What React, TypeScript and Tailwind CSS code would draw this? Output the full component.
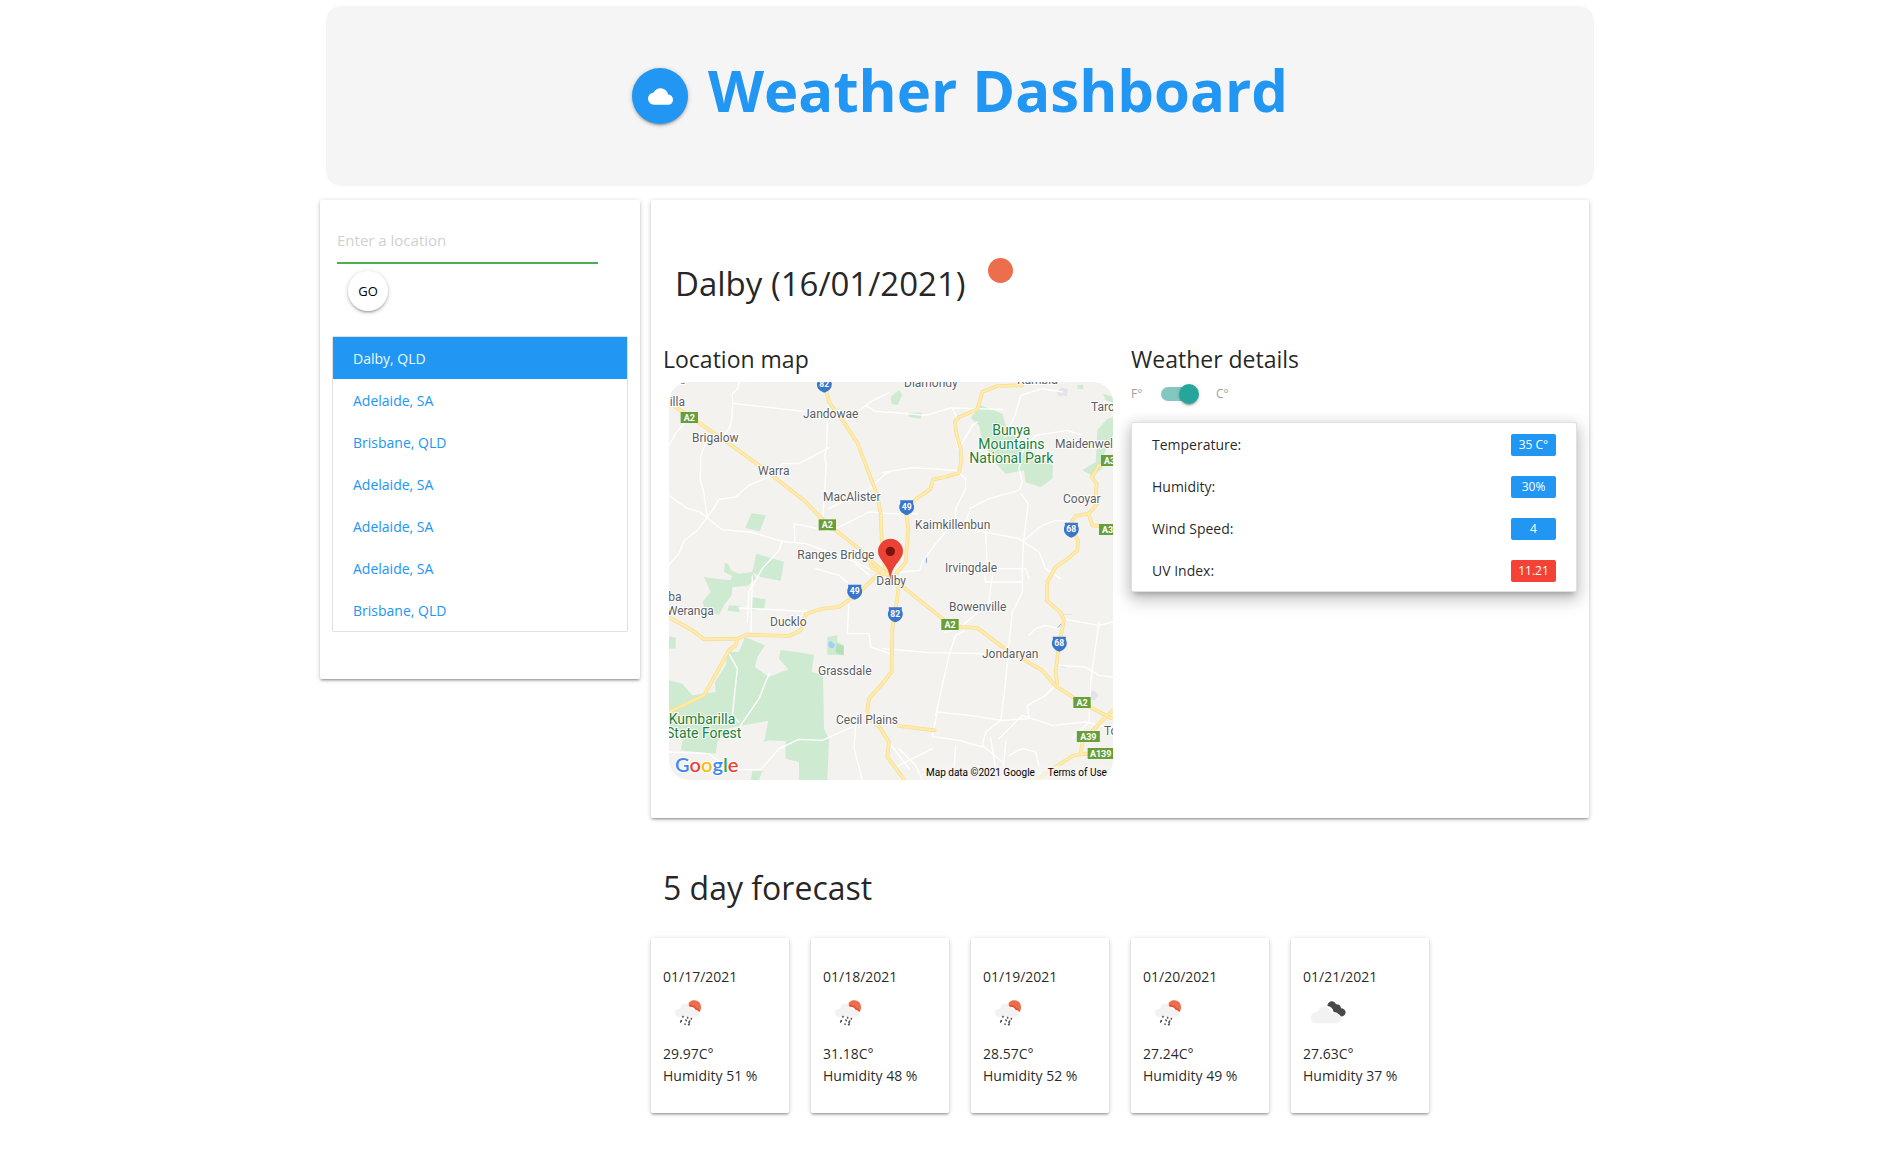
import { useState } from "react";
import { MdCloud } from "react-icons/md";

const cardShadow =
  "rounded-xs bg-white shadow-[0_2px_2px_0_rgba(0,0,0,0.14),0_3px_1px_-2px_rgba(0,0,0,0.12),0_1px_5px_0_rgba(0,0,0,0.2)]";

const places = [
  "Dalby, QLD",
  "Adelaide, SA",
  "Brisbane, QLD",
  "Adelaide, SA",
  "Adelaide, SA",
  "Adelaide, SA",
  "Brisbane, QLD",
];

const details = [
  { label: "Temperature:", value: "35 C°", tone: "bg-[#2196f3]" },
  { label: "Humidity:", value: "30%", tone: "bg-[#2196f3]" },
  { label: "Wind Speed:", value: "4", tone: "bg-[#2196f3]" },
  { label: "UV Index:", value: "11.21", tone: "bg-[#f44336]" },
];

const forecast = [
  { date: "01/17/2021", temp: "29.97C°", humidity: 51, rain: true },
  { date: "01/18/2021", temp: "31.18C°", humidity: 48, rain: true },
  { date: "01/19/2021", temp: "28.57C°", humidity: 52, rain: true },
  { date: "01/20/2021", temp: "27.24C°", humidity: 49, rain: true },
  { date: "01/21/2021", temp: "27.63C°", humidity: 37, rain: false },
];

function RainIcon() {
  return (
    <svg viewBox="0 0 150 150" className="size-[50px]" aria-label="Rain">
      <path d="M76 50C75 36 84 31 94 31c12 0 20 9 20 20 0 5-1 10-4 14-3-5-8-7-12-8-3-7-12-11-22-7z" fill="#ec6e4c" />
      <path d="M77 46c9-3 18 1 22 8 4 1 9 4 12 8l-2 5c-3-5-7-7-12-8-3-7-11-11-20-8z" fill="#e2502f" />
      <path
        d="M49 82a13 13 0 0 1 1-26c2-1 3-3 3-6a14 14 0 0 1 27 1c6 1 9 5 10 8 10-1 17 5 17 12 0 6-5 11-11 11z"
        fill="#f2f2f2"
      />
      <path
        d="M60 80v1M55 92l-2 4M74 83v1M69 90l1 2M85 86v1M80 93l-2 4M66 102v1M79 102l-2 2"
        stroke="#48484a"
        strokeWidth="5"
        strokeLinecap="round"
      />
    </svg>
  );
}

function CloudsIcon() {
  return (
    <svg viewBox="-12 0 150 150" className="size-[50px]" aria-label="Broken clouds">
      <path
        d="M61 48C63 30 82 30 87 43c8-1 15 4 15 12 13 1 18 13 10 21-5 5-12 4-17 0-2-7-8-10-15-10-2-11-9-17-19-18z"
        fill="#48484a"
      />
      <path
        d="M29 100a17 17 0 0 1-1-34c2-1 5-1 6-3a17 17 0 0 1 33-1c2 5 8 7 12 7 11 0 24 4 24 16 0 8-6 15-14 15z"
        fill="#f2f2f2"
      />
    </svg>
  );
}

type Pt = { x: number; y: number; text: string };

const towns: Pt[] = [
  { x: -14, y: 6, text: "erra" },
  { x: 2, y: 72, text: "illa" },
  { x: 402, y: 108, text: "Jandowae" },
  { x: 69, y: 180, text: "Brigalow" },
  { x: 267, y: 279, text: "Warra" },
  { x: 462, y: 357, text: "MacAlister" },
  { x: 385, y: 531, text: "Ranges Bridge" },
  { x: 705, y: 14, text: "Diamondy" },
  { x: 1044, y: 7, text: "Kumbia" },
  { x: 1266, y: 87, text: "Tarong" },
  { x: 1158, y: 198, text: "Maidenwell" },
  { x: 1182, y: 363, text: "Cooyar" },
  { x: 738, y: 441, text: "Kaimkillenbun" },
  { x: 828, y: 570, text: "Irvingdale" },
  { x: 622, y: 609, text: "Dalby" },
  { x: -2, y: 657, text: "ba" },
  { x: -7, y: 699, text: "Weranga" },
  { x: 303, y: 732, text: "Ducklo" },
  { x: 447, y: 879, text: "Grassdale" },
  { x: 501, y: 1026, text: "Cecil Plains" },
  { x: 840, y: 687, text: "Bowenville" },
  { x: 939, y: 828, text: "Jondaryan" },
  { x: 1305, y: 1060, text: "To" },
];

const highways: Pt[] = [
  { x: 61, y: 106, text: "A2" },
  { x: 475, y: 428, text: "A2" },
  { x: 843, y: 727, text: "A2" },
  { x: 1239, y: 961, text: "A2" },
  { x: 1322, y: 235, text: "A3" },
  { x: 1316, y: 442, text: "A3" },
  { x: 1258, y: 1063, text: "A39" },
  { x: 1295, y: 1114, text: "A139" },
];

const routes: Pt[] = [
  { x: 466, y: 8, text: "82" },
  { x: 713, y: 376, text: "49" },
  { x: 1207, y: 443, text: "68" },
  { x: 557, y: 629, text: "49" },
  { x: 679, y: 697, text: "82" },
  { x: 1171, y: 785, text: "68" },
];

const minorRoads = [
  "M210 0L208 18 190 35 191 64 188 116 180 140 165 158 133 175 106 192 95 225 95 260 93 290 103 325 116 409",
  "M0 341L55 380 90 388 116 409 160 443 245 450 340 478 410 485 475 508 560 540 610 565",
  "M191 64L420 90M475 120L473 196 466 225 472 245 466 340 462 400M480 197L390 245 340 245 300 285 240 310 200 345 150 352 130 385 85 445 45 477 30 515 0 548",
  "M0 190L20 155 60 108M480 447L376 425 377 480M340 478L330 505 280 560 240 628 235 720",
  "M590 70L620 88 663 92M530 115L612 55 663 30M480 380L600 320 650 275 663 272M500 440L600 390 660 395 745 395",
  "M660 90L770 100 845 78 1000 82M850 80L865 110 860 170 868 200M1008 165L1040 95 1055 40 1120 20 1180 30",
  "M870 200L910 130 925 120M640 272L730 257 860 265 890 290 890 320 860 380 860 415 800 485 760 540 752 565 690 570",
  "M902 388L890 420 920 445 1050 470 1110 510 1130 560 1175 590M902 380L960 350 1050 325 1060 300 1050 260 1060 210 1100 160 1195 145 1240 160",
  "M1055 335L1078 365 1063 480 1060 570M1065 475L1120 430 1160 415 1210 418M950 450L955 560 1070 560 1080 590",
  "M640 800L780 812 990 816 1020 790M1020 800L1005 940 995 1015 950 1050 940 1090 1000 1140M1020 785L1030 690 1060 630 1060 560M945 560L950 600 1060 600",
  "M805 990L900 1000 1000 1015 1080 1010 1075 970 1130 940 1160 910M805 990L790 1064 870 1075 940 1095M990 1070L1060 1000 1150 1030 1250 1020 1332 1040",
  "M0 1110L120 1115 180 1162 275 1163 330 1100 390 1072 460 1075 560 1030M560 1030L555 1100 580 1194M690 1100L740 1150 760 1194",
  "M560 545L600 578M860 1090L855 1160M965 1068L980 1160M1190 712L1290 730 1332 720M1170 850L1250 855 1290 880 1332 885M1290 720L1265 900 1260 1020 1210 1070",
  "M540 650L535 755 600 755 605 795 663 815M830 750L870 740 960 660 970 580M1080 760L1100 740 1130 730 1170 740M800 1000L840 820 860 760 885 748",
  "M250 582L246 750M440 560L510 580 535 602M210 678L445 690M180 815L205 860 190 1000 210 1020M300 875L270 950 215 1030",
  "M648 1065L720 1160M680 1155L790 1100M1020 1120L1060 1100 1100 1110 1120 1194M1010 1080L1000 1194",
];

const majorRoads = [
  "M20 76L45 92 160 170 270 250 405 355 470 422 570 500 602 532 650 575 690 605 820 710 850 733 925 738 1010 802 1120 865 1160 912 1230 958 1320 1005 1332 1010",
  "M468 10L480 60 520 115 565 182 625 340 635 395 638 470 648 560",
  "M1060 10L985 12 940 30 925 82 870 105 858 120 863 160 875 200 876 240 870 272 830 285 792 292 785 320 740 352 718 375 712 400 718 440 710 540 690 565 665 590",
  "M602 530L608 558 645 573M0 706L65 742 105 772 205 770 235 758 360 762 395 745 412 695 460 680 510 675 560 640 625 580 655 573",
  "M205 770L200 790 180 805 105 940 0 990M690 600L685 650 670 740 668 870 640 905 600 950 595 985 600 1010 635 1040 660 1080 655 1125 700 1185 710 1200",
  "M690 1032L797 1045M1332 240L1290 250 1268 285 1283 305 1280 340 1285 365 1260 395 1220 402 1200 430 1227 475 1225 505 1190 535 1160 555 1135 600 1133 655 1175 692 1185 715 1170 785 1160 870 1165 905",
  "M1258 393L1270 430 1330 435M1332 985L1290 1025 1240 1080 1235 1115 1260 1117M1100 1194L1210 1122 1240 1115",
];

const forests = [
  "M248 394L291 400 272 448 228 438zM262 515L345 540 335 596 275 585 250 570z",
  "M105 585L140 590 185 595 190 582 165 570 168 543 180 548 185 565 210 575 250 570 262 590 235 612 190 615 188 640 165 670 150 698 110 690 100 660 125 630z",
  "M250 646L290 652 285 680 248 686zM180 670L212 672 210 690 175 686zM0 762L20 768 20 800 0 800z",
  "M228 765L288 790 265 825 258 855 300 885 358 862 330 830 335 804 365 808 435 818 428 870 462 880 465 1040 480 1070 475 1194 390 1194 390 1140 350 1130 350 1078 300 1075 285 1080 298 1016 180 1038 145 1080 140 1115 35 1105 45 1060 0 1050 0 895 40 905 70 940 140 930 138 900 170 850 175 810 210 810z",
  "M475 765L505 760 505 780 525 790 525 820 475 818zM250 1168L280 1166 270 1194 246 1194z",
  "M665 45L690 24 700 40 685 70 668 65zM718 92L760 92 755 110 720 105z",
  "M905 108L935 70 1000 95 1010 130 1060 190 1152 250 1150 290 1115 315 1070 300 1065 265 1010 275 985 250 960 210 940 180 930 130z",
  "M1225 10L1242 8 1244 22 1226 20zM1302 35L1332 45 1332 62 1310 55zM1285 145L1315 110 1332 105 1332 160 1305 215 1300 260 1268 280 1240 265 1280 240z",
];

function LocationMap() {
  return (
    <svg
      viewBox="0 0 1332 1194"
      role="img"
      aria-label="Map of Dalby"
      className="block w-full rounded-[20px] bg-[#f3f2ef] font-[Roboto,sans-serif]"
    >
      {forests.map((d) => (
        <path key={d} d={d} fill="#ceead0" />
      ))}
      <path d="M477 783l8-6 14 12-6 10-12-2z" fill="#9fd0fb" />
      <path d="M502 785l22 6v28l-24-6z" fill="#b4dfba" />
      <path d="M1165 30l12-12 18 4-2 18-24 2zM1262 935l12-8 14 12-12 16-10-4zM575 398l14-2M1182 697l28 1M1170 850l20 8" fill="#e3e4e8" stroke="#e3e4e8" strokeWidth="3" />
      <path d="M772 525v18M1165 738l12-12" stroke="#7ba5d8" strokeWidth="3" />
      <g fill="none" strokeLinejoin="round" strokeLinecap="round">
        {minorRoads.map((d) => (
          <path key={d} d={d} stroke="#ffffff" strokeWidth="4" />
        ))}
        {majorRoads.map((d) => (
          <path key={d} d={d} stroke="#f9dc8c" strokeWidth="11" />
        ))}
        {majorRoads.map((d) => (
          <path key={d} d={d} stroke="#ffebab" strokeWidth="7" />
        ))}
      </g>
      {highways.map((h) => {
        const w = h.text.length === 4 ? 78 : h.text.length === 3 ? 69 : 52;
        return (
          <g key={h.x}>
            <rect x={h.x - w / 2} y={h.y - 16} width={w} height="33" fill="#689f38" />
            <text x={h.x} y={h.y + 10} textAnchor="middle" fontSize="27" fontWeight="700" fill="#fff">
              {h.text}
            </text>
          </g>
        );
      })}
      {routes.map((r) => (
        <g key={r.x} transform={`translate(${r.x} ${r.y})`}>
          <path d="M-20-21h40q-3 8 2 16c2 15-8 24-22 29-14-5-24-14-22-29q5-8 2-16z" fill="#3a76cc" />
          <text y="8" textAnchor="middle" fontSize="26" fontWeight="700" fill="#fff">
            {r.text}
          </text>
        </g>
      ))}
      <g fontSize="36" fill="#5a5d62" stroke="#ffffff" strokeWidth="6" strokeLinejoin="round" paintOrder="stroke">
        {towns.map((t) => (
          <text key={`${t.x}-${t.y}`} x={t.x} y={t.y}>
            {t.text}
          </text>
        ))}
        <g fill="#188038" fontSize="42">
          <text x="1027" y="160" textAnchor="middle">Bunya</text>
          <text x="1027" y="202" textAnchor="middle">Mountains</text>
          <text x="1027" y="244" textAnchor="middle">National Park</text>
          <text x="-1" y="1026">Kumbarilla</text>
          <text x="-9" y="1068">State Forest</text>
        </g>
      </g>
      <path
        d="M664 594c-3-28-12-40-23-55-8-12-14-18-14-31a37 37 0 0 1 75 0c0 13-6 19-14 31-12 15-21 27-24 55z"
        fill="#ea4335"
      />
      <circle cx="664" cy="508" r="14" fill="#7f120c" />
      <text
        x="18"
        y="1171"
        fontSize="60"
        fontWeight="600"
        className="font-[Lato,sans-serif]"
        stroke="#ffffff"
        strokeWidth="6"
        paintOrder="stroke"
      >
        <tspan fill="#4285f4">G</tspan>
        <tspan fill="#ea4335">o</tspan>
        <tspan fill="#fbbc04">o</tspan>
        <tspan fill="#4285f4">g</tspan>
        <tspan fill="#34a853">l</tspan>
        <tspan fill="#ea4335">e</tspan>
      </text>
      <rect x="756" y="1152" width="576" height="42" fill="#f5f5f5" fillOpacity="0.7" />
      <g fontSize="30" fill="#000">
        <text x="771" y="1181">Map data ©2021 Google</text>
        <text x="1136" y="1181">Terms of Use</text>
      </g>
    </svg>
  );
}

export default function App() {
  const [celsius, setCelsius] = useState(true);
  return (
    <div className="min-h-screen bg-white pt-1.5 pl-1.5 font-['Open_Sans','Noto_Sans',sans-serif] text-sm text-black/87">
      <div className="mx-auto max-w-[1269px]">
        <header className="-mr-[5px] ml-1.5 flex h-[180px] items-center justify-center gap-5 rounded-[15px] bg-[#f5f5f5]">
          <span className="flex size-14 items-center justify-center rounded-full bg-[#2196f3] text-white shadow-[0_2px_2px_0_rgba(0,0,0,0.14),0_3px_1px_-2px_rgba(0,0,0,0.12),0_1px_5px_0_rgba(0,0,0,0.2)]">
            <MdCloud size={25} />
          </span>
          <h1 className="pb-3 text-[58px] leading-none font-bold text-[#2196f3]">Weather Dashboard</h1>
        </header>

        <div className="mt-3.5 flex items-start gap-[11px]">
          <aside className={`w-80 shrink-0 px-3 pb-[47px] ${cardShadow}`}>
            <form className="px-[5px] pt-[18px]" onSubmit={(e) => e.preventDefault()}>
              <input
                aria-label="Enter a location"
                placeholder="Enter a location"
                className="block h-[46px] w-[261px] border-b-2 border-[#4caf50] text-[15px] outline-none placeholder:text-[#d1d1d1]"
              />
              <button className="mt-[7px] ml-[11px] flex size-10 items-center justify-center rounded-full bg-white text-[13px] text-black shadow-[0_2px_2px_0_rgba(0,0,0,0.14),0_3px_1px_-2px_rgba(0,0,0,0.12),0_1px_5px_0_rgba(0,0,0,0.2)]">
                GO
              </button>
            </form>
            <nav className="mt-[25px] rounded-xs border border-[#e0e0e0]" aria-label="Saved locations">
              {places.map((place, i) => (
                <a
                  key={i}
                  href="#"
                  className={`flex h-[42px] items-center px-5 pt-0.5 ${i === 0 ? "bg-[#2196f3] text-[#eafaf9]" : "text-[#2196f3]"}`}
                >
                  {place}
                </a>
              ))}
            </nav>
          </aside>

          <main className="min-w-0 flex-1">
            <section className={`px-3 pt-[58px] pb-[38px] ${cardShadow}`}>
              <div className="flex items-start gap-[22px] pl-3">
                <h2 className="pt-0.5 text-[33px] leading-[48px]">Dalby (16/01/2021)</h2>
                <span className="size-[25px] rounded-full bg-[#ec6e4c]" aria-label="Clear sky" />
              </div>
              <div className="mt-9 grid grid-cols-2 gap-[22px]">
                <div>
                  <h3 className="text-[23px] leading-[30px]">Location map</h3>
                  <div className="mt-2 -mr-1 ml-1.5">
                    <LocationMap />
                  </div>
                </div>
                <div>
                  <h3 className="text-[23px] leading-[30px]">Weather details</h3>
                  <label className="mt-2.5 flex h-5 cursor-pointer items-center text-xs text-[#9e9e9e]">
                    <span className="w-[30px]">F°</span>
                    <input
                      type="checkbox"
                      className="peer sr-only"
                      checked={celsius}
                      onChange={(e) => setCelsius(e.target.checked)}
                    />
                    <span className="mr-[19px] flex h-3.5 w-9 items-center rounded-full bg-[#84c7c1] peer-checked:justify-end">
                      <span className="-mr-0.5 size-5 shrink-0 rounded-full bg-[#26a69a] shadow-[0_3px_1px_-2px_rgba(0,0,0,0.2),0_2px_2px_0_rgba(0,0,0,0.14),0_1px_5px_0_rgba(0,0,0,0.12)]" />
                    </span>
                    <span>C°</span>
                  </label>
                  <dl className="mt-[18px] rounded-xs border border-[#e0e0e0] bg-white shadow-[0_8px_17px_2px_rgba(0,0,0,0.14),0_3px_14px_2px_rgba(0,0,0,0.12),0_5px_5px_-3px_rgba(0,0,0,0.2)]">
                    {details.map((d) => (
                      <div key={d.label} className="flex h-[42px] items-center justify-between px-5 pt-0.5">
                        <dt>{d.label}</dt>
                        <dd className={`flex h-[22px] w-[45px] items-center justify-center rounded-xs text-xs text-white ${d.tone}`}>
                          {d.value}
                        </dd>
                      </div>
                    ))}
                  </dl>
                </div>
              </div>
            </section>

            <h2 className="mt-[46px] pl-3 text-[32px] leading-[48px]">5 day forecast</h2>
            <div className="mt-[26px] flex flex-wrap gap-[22px] pb-10">
              {forecast.map((f) => (
                <article key={f.date} className={`h-[175px] w-[138px] px-3 pt-7 leading-[22px] ${cardShadow}`}>
                  <p>{f.date}</p>
                  <div className="mt-0.5 mb-[3px]">{f.rain ? <RainIcon /> : <CloudsIcon />}</div>
                  <p>{f.temp}</p>
                  <p>Humidity {f.humidity} %</p>
                </article>
              ))}
            </div>
          </main>
        </div>
      </div>
    </div>
  );
}
